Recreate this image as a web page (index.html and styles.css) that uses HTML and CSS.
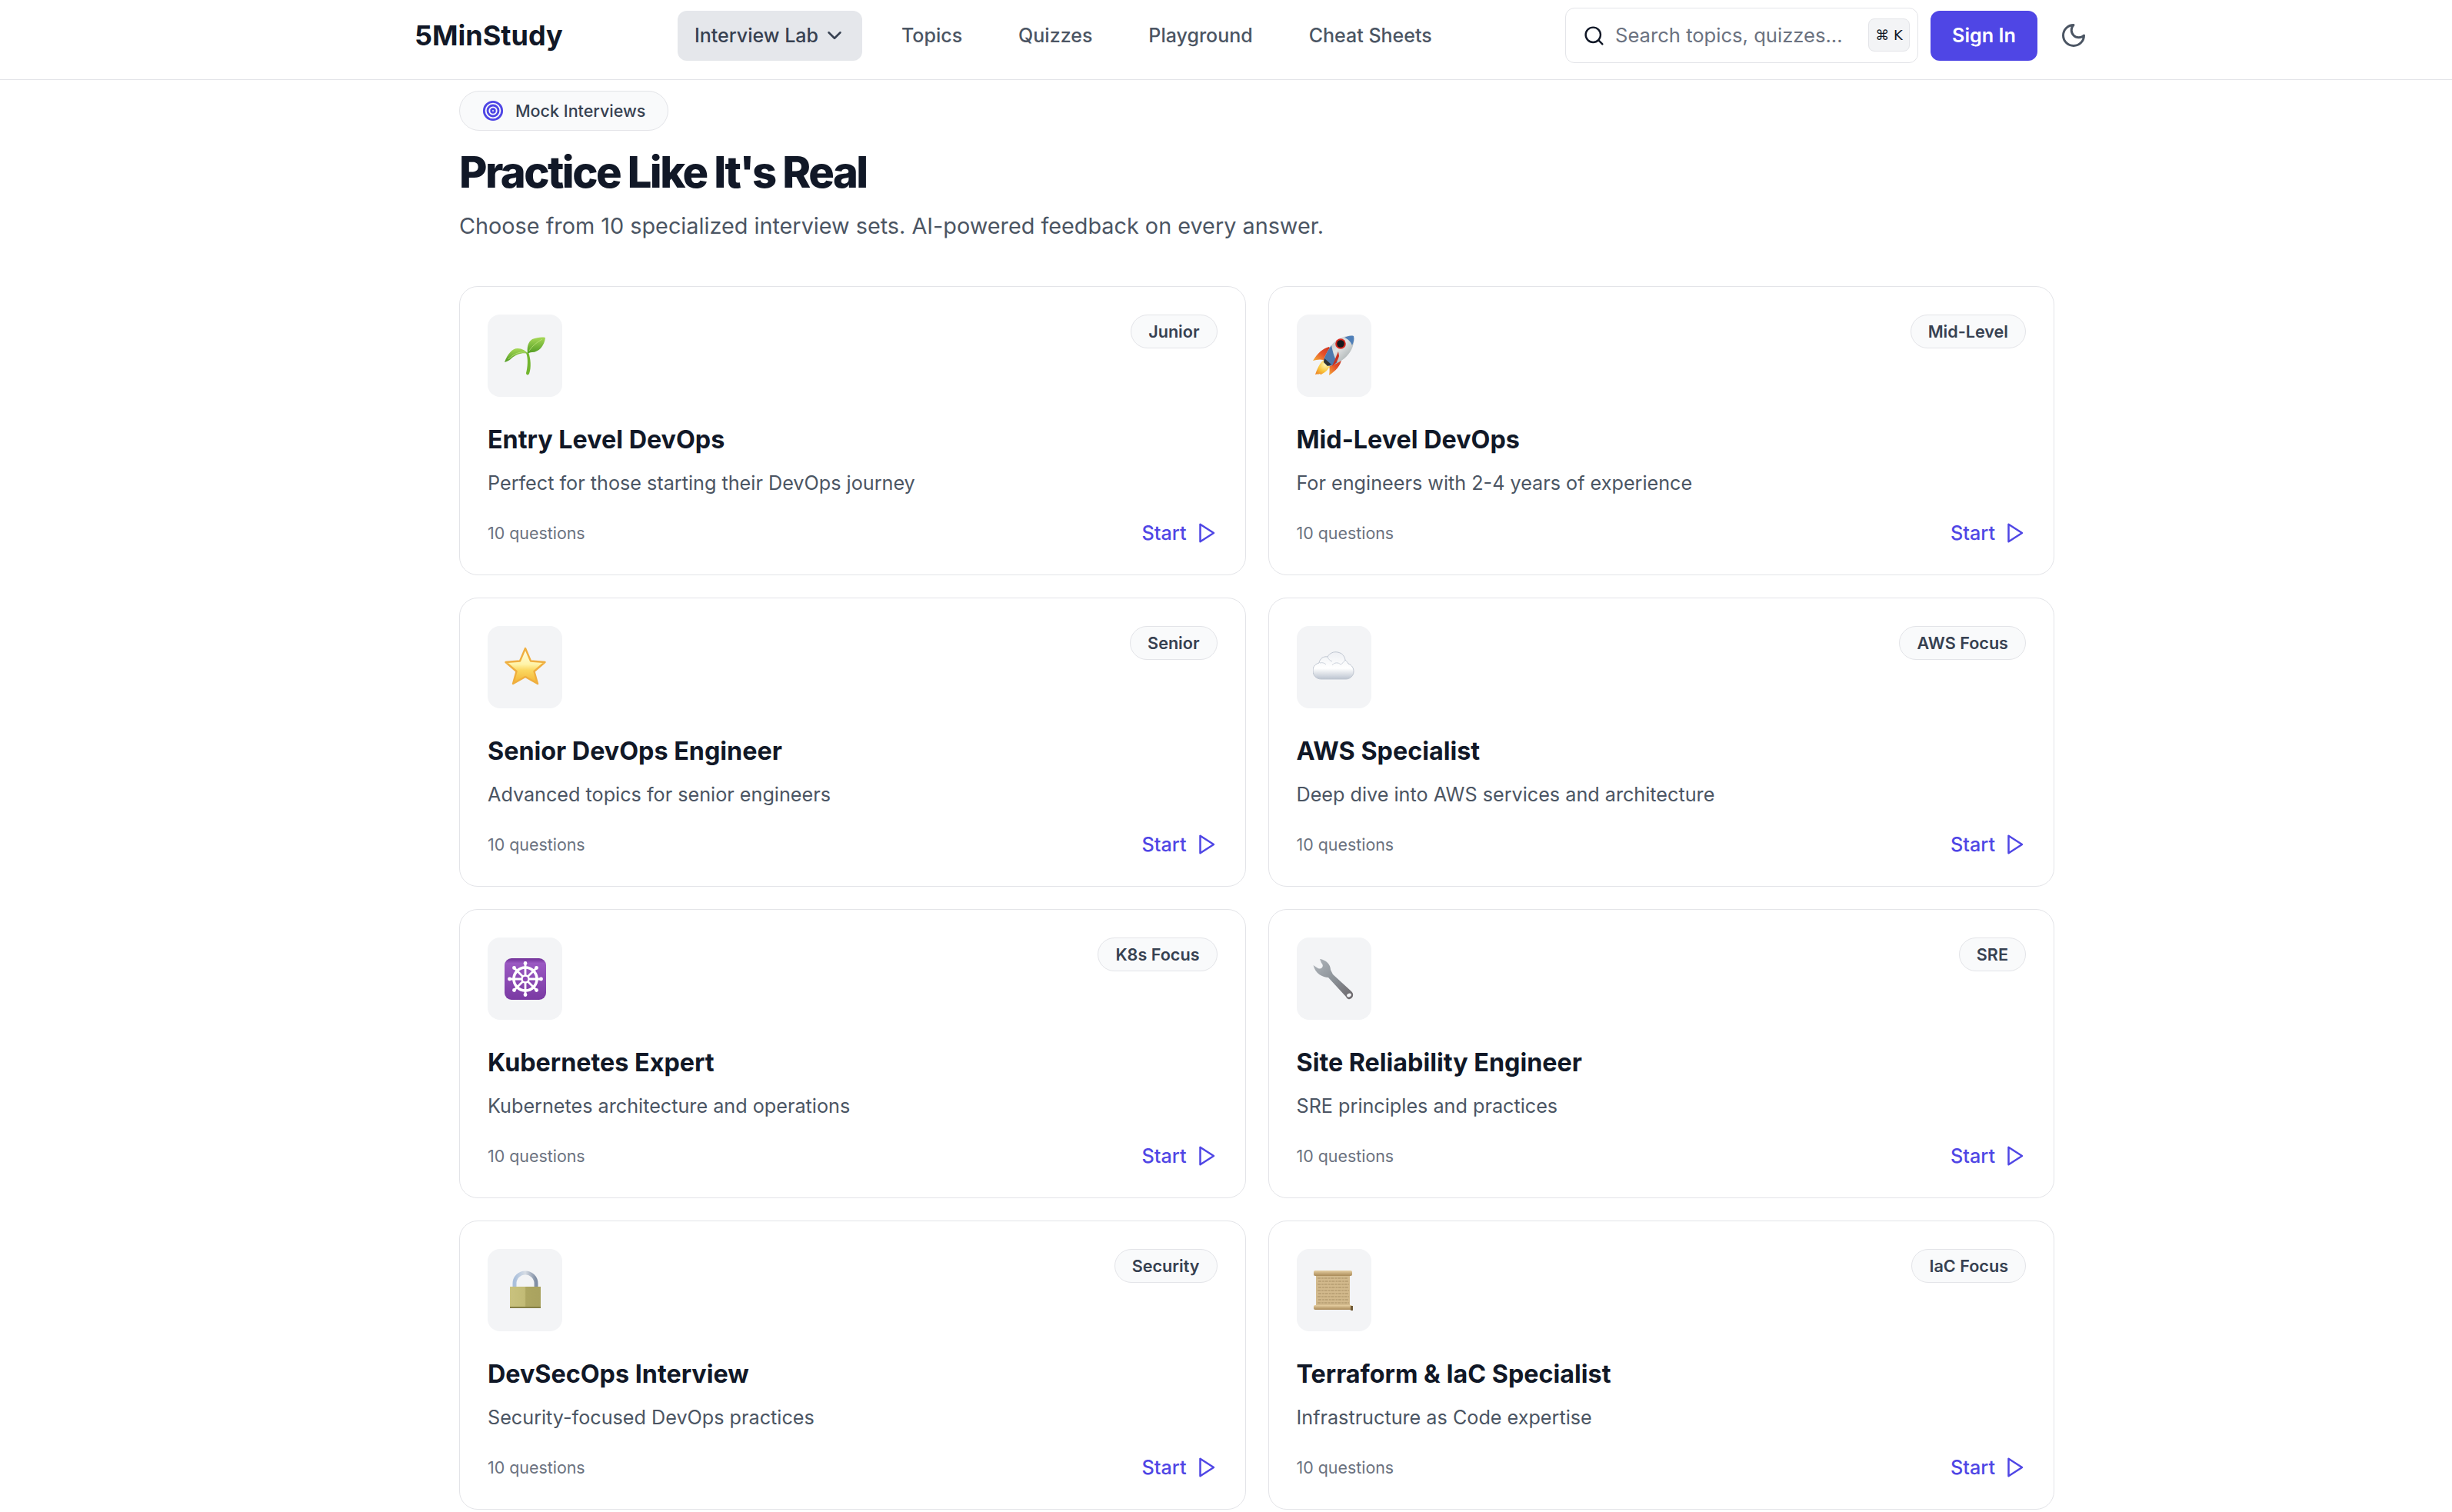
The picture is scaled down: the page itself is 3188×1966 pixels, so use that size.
FILE: index.html
```html
<!DOCTYPE html>
<html lang="en">
<head>
<meta charset="utf-8">
<title>5MinStudy – Mock Interviews</title>
<link rel="stylesheet" href="styles.css">
</head>
<body>
<header class="site-header">
  <a class="logo">5MinStudy</a>
  <nav class="nav">
    <a class="nav-item active">Interview Lab
      <svg class="chev" viewBox="0 0 24 24" fill="none" stroke="currentColor" stroke-width="2" stroke-linecap="round" stroke-linejoin="round"><path d="m6 9 6 6 6-6"/></svg>
    </a>
    <a class="nav-item">Topics</a>
    <a class="nav-item">Quizzes</a>
    <a class="nav-item">Playground</a>
    <a class="nav-item">Cheat Sheets</a>
  </nav>
  <div class="search">
    <svg class="search-icon" viewBox="0 0 24 24" fill="none" stroke="currentColor" stroke-width="2" stroke-linecap="round" stroke-linejoin="round"><circle cx="11" cy="11" r="8"/><path d="m21 21-4.3-4.3"/></svg>
    <span class="search-text">Search topics, quizzes...</span>
    <kbd class="kbd">⌘ K</kbd>
  </div>
  <a class="signin">Sign In</a>
  <a class="theme">
    <svg viewBox="0 0 24 24" fill="none" stroke="currentColor" stroke-width="2" stroke-linecap="round" stroke-linejoin="round"><path d="M12 3a6 6 0 0 0 9 9 9 9 0 1 1-9-9Z"/></svg>
  </a>
</header>

<main class="main">
  <div class="pill">
    <svg class="pill-icon" viewBox="0 0 24 24" fill="none" stroke="currentColor" stroke-width="2.4"><circle cx="12" cy="12" r="10"/><circle cx="12" cy="12" r="6"/><circle cx="12" cy="12" r="2"/></svg>
    Mock Interviews
  </div>
  <h1 class="title">Practice Like It's Real</h1>
  <p class="lead">Choose from 10 specialized interview sets. AI-powered feedback on every answer.</p>

  <section class="grid">

    <article class="card">
      <div class="card-top">
        <div class="tile">
          <svg class="emoji" viewBox="0 0 54 54">
            <defs><linearGradient id="leaf" x1="0" y1="0" x2="0" y2="1"><stop offset="0" stop-color="#a6d856"/><stop offset="1" stop-color="#4f9a22"/></linearGradient></defs>
            <path d="M28 23C31 30 30 42 28 49C28 52 31 52 32 50C35 42 34 30 31 22Z" fill="#72b52e"/>
            <path d="M0 35C4 24 10 17 17 17C23 17 27 20 31 24C23 22 15 25 9 30C6 33 3 34 0 35Z" fill="url(#leaf)"/>
            <path d="M53 3C52 14 44 22 36 22C33 22 31 23 30 24C29 16 30 9 36 5C42 3 48 2 53 3Z" fill="url(#leaf)"/>
            <path d="M32 20C36 14 42 9 49 5M5 31C11 25 18 21 27 22" fill="none" stroke="#c2e583" stroke-width=".7"/>
          </svg>
        </div>
        <span class="tag">Junior</span>
      </div>
      <h2 class="card-title">Entry Level DevOps</h2>
      <p class="card-desc">Perfect for those starting their DevOps journey</p>
      <div class="card-foot">
        <span class="count">10 questions</span>
        <a class="start">Start <svg class="play" viewBox="0 0 24 24" fill="none" stroke="currentColor" stroke-width="2" stroke-linecap="round" stroke-linejoin="round"><path d="M6 3v18l14-9Z"/></svg></a>
      </div>
    </article>

    <article class="card">
      <div class="card-top">
        <div class="tile">
          <svg class="emoji" viewBox="0 0 54 54">
            <defs>
              <linearGradient id="hull" x1="0" y1="0" x2="1" y2="1"><stop offset="0" stop-color="#9a9fa3"/><stop offset=".45" stop-color="#e2e4e4"/><stop offset="1" stop-color="#8a9597"/></linearGradient>
              <linearGradient id="fin" x1="0" y1="1" x2="1" y2="0"><stop offset="0" stop-color="#f6b23a"/><stop offset=".5" stop-color="#e5502a"/><stop offset="1" stop-color="#c9301f"/></linearGradient>
              <radialGradient id="flame" cx=".65" cy=".35" r=".8"><stop offset="0" stop-color="#fff5b8"/><stop offset=".55" stop-color="#f9c63c"/><stop offset="1" stop-color="#ee8a2a"/></radialGradient>
            </defs>
            <path d="M21 15C13 17 6 23 0 33C6 31 12 31 18 33L26 22Z" fill="url(#fin)"/>
            <path d="M37 32C36 39 30 46 21 52C22 46 22 41 20 36L30 28Z" fill="url(#fin)"/>
            <path d="M16 31C10 34 7 40 3 51C6 50 7 51 9 50C10 52 12 50 14 49C19 46 22 41 23 37Z" fill="url(#flame)"/>
            <path d="M53 1C44 -1 31 4 24 13C19 20 15 28 14 33L21 40C27 39 35 35 41 30C51 22 55 9 53 1Z" fill="url(#hull)"/>
            <path d="M53 1C49 0 45 1 41 3C46 5 49 8 51 13C53 9 54 5 53 1Z" fill="#4f7fb8"/>
            <path d="M24 13C19 20 15 28 14 33L21 40C26 39 29 37 32 35C28 30 26 22 24 13Z" fill="#4f79ad"/>
            <path d="M15 30L14 35L19 40L24 38Z" fill="#2d3134"/>
            <path d="M33 21C30 28 27 36 25 40C30 37 32 33 34 27Z" fill="#c9301f"/>
            <circle cx="36" cy="11" r="6.8" fill="#d7281e"/>
            <circle cx="36" cy="11" r="4.8" fill="#16181b"/>
          </svg>
        </div>
        <span class="tag">Mid-Level</span>
      </div>
      <h2 class="card-title">Mid-Level DevOps</h2>
      <p class="card-desc">For engineers with 2-4 years of experience</p>
      <div class="card-foot">
        <span class="count">10 questions</span>
        <a class="start">Start <svg class="play" viewBox="0 0 24 24" fill="none" stroke="currentColor" stroke-width="2" stroke-linecap="round" stroke-linejoin="round"><path d="M6 3v18l14-9Z"/></svg></a>
      </div>
    </article>

    <article class="card">
      <div class="card-top">
        <div class="tile">
          <svg class="emoji" viewBox="0 0 54 54">
            <defs><linearGradient id="star" x1="0" y1="0" x2="0" y2="1"><stop offset="0" stop-color="#fffde8"/><stop offset=".45" stop-color="#fff3a8"/><stop offset=".62" stop-color="#fbd75f"/><stop offset="1" stop-color="#f2b233"/></linearGradient></defs>
            <path d="M27 2L34 18.500L52.500 20L38.500 32L43 48L27 39L11 48L15.500 32L1.500 20L20 18.500Z" fill="url(#star)" stroke="#efae3f" stroke-width="2.400" stroke-linejoin="round"/>
          </svg>
        </div>
        <span class="tag">Senior</span>
      </div>
      <h2 class="card-title">Senior DevOps Engineer</h2>
      <p class="card-desc">Advanced topics for senior engineers</p>
      <div class="card-foot">
        <span class="count">10 questions</span>
        <a class="start">Start <svg class="play" viewBox="0 0 24 24" fill="none" stroke="currentColor" stroke-width="2" stroke-linecap="round" stroke-linejoin="round"><path d="M6 3v18l14-9Z"/></svg></a>
      </div>
    </article>

    <article class="card">
      <div class="card-top">
        <div class="tile">
          <svg class="emoji" viewBox="0 0 54 54">
            <defs><linearGradient id="cloud" x1="0" y1="0" x2="0" y2="1"><stop offset="0" stop-color="#eef0f4"/><stop offset=".6" stop-color="#ffffff"/><stop offset="1" stop-color="#bcc4d0"/></linearGradient></defs>
            <path d="M11 42C4 42 0 37 0 31C0 25 4 22 8 21C9 15 14 12 19 13C22 8 27 6 32 7C38 8 41 12 42 17C44 19 45 20 46 22C51 24 53 28 53 32C53 38 48 42 43 42Z" fill="url(#cloud)" stroke="#bfc6d1" stroke-width="1"/>
            <path d="M9 21C12 20 15 21 17 23M19 13C20 16 22 18 25 19M25 24C28 20 33 20 36 23M42 17C40 20 38 22 36 23" fill="none" stroke="#cdd3dc" stroke-width="1"/>
          </svg>
        </div>
        <span class="tag">AWS Focus</span>
      </div>
      <h2 class="card-title">AWS Specialist</h2>
      <p class="card-desc">Deep dive into AWS services and architecture</p>
      <div class="card-foot">
        <span class="count">10 questions</span>
        <a class="start">Start <svg class="play" viewBox="0 0 24 24" fill="none" stroke="currentColor" stroke-width="2" stroke-linecap="round" stroke-linejoin="round"><path d="M6 3v18l14-9Z"/></svg></a>
      </div>
    </article>

    <article class="card">
      <div class="card-top">
        <div class="tile">
          <svg class="emoji" viewBox="0 0 54 54">
            <defs><linearGradient id="purple" x1="0" y1="0" x2="0" y2="1"><stop offset="0" stop-color="#6f2f96"/><stop offset=".12" stop-color="#9a58c2"/><stop offset="1" stop-color="#7a3aa3"/></linearGradient></defs>
            <rect x="0" y="0" width="54" height="54" rx="9" fill="url(#purple)"/>
            <g stroke="#fff" fill="none">
              <circle cx="27" cy="27" r="15" stroke-width="3.600"/>
              <path d="M27 6V48M6 27H48M12.200 12.200L41.800 41.800M41.800 12.200L12.200 41.800" stroke-width="2.800" stroke-linecap="round"/>
              <circle cx="27" cy="27" r="4.500" fill="#8f4bb6" stroke-width="2.400"/>
            </g>
            <g fill="#fff"><circle cx="27" cy="6.500" r="2.400"/><circle cx="27" cy="47.500" r="2.400"/><circle cx="6.500" cy="27" r="2.400"/><circle cx="47.500" cy="27" r="2.400"/><circle cx="12.500" cy="12.500" r="2.400"/><circle cx="41.500" cy="41.500" r="2.400"/><circle cx="41.500" cy="12.500" r="2.400"/><circle cx="12.500" cy="41.500" r="2.400"/></g>
          </svg>
        </div>
        <span class="tag">K8s Focus</span>
      </div>
      <h2 class="card-title">Kubernetes Expert</h2>
      <p class="card-desc">Kubernetes architecture and operations</p>
      <div class="card-foot">
        <span class="count">10 questions</span>
        <a class="start">Start <svg class="play" viewBox="0 0 24 24" fill="none" stroke="currentColor" stroke-width="2" stroke-linecap="round" stroke-linejoin="round"><path d="M6 3v18l14-9Z"/></svg></a>
      </div>
    </article>

    <article class="card">
      <div class="card-top">
        <div class="tile">
          <svg class="emoji" viewBox="0 0 54 54">
            <defs><linearGradient id="steel" x1="0" y1="0" x2="1" y2="1"><stop offset="0" stop-color="#b0b6bc"/><stop offset=".5" stop-color="#8c9298"/><stop offset="1" stop-color="#6a6569"/></linearGradient></defs>
            <path d="M9 1C17 2 23 8 23 15L26 21L50 43C54 47 52 52 48 53C46 54 44 52 43 50L20 25C13 25 3 20 0.500 9L5 12Q9 15 12 12Q14 9 11 6Z" fill="url(#steel)"/>
            <ellipse cx="47" cy="48" rx="3" ry="2.200" fill="#f3f4f6" transform="rotate(-30 47 48)"/>
          </svg>
        </div>
        <span class="tag">SRE</span>
      </div>
      <h2 class="card-title">Site Reliability Engineer</h2>
      <p class="card-desc">SRE principles and practices</p>
      <div class="card-foot">
        <span class="count">10 questions</span>
        <a class="start">Start <svg class="play" viewBox="0 0 24 24" fill="none" stroke="currentColor" stroke-width="2" stroke-linecap="round" stroke-linejoin="round"><path d="M6 3v18l14-9Z"/></svg></a>
      </div>
    </article>

    <article class="card">
      <div class="card-top">
        <div class="tile">
          <svg class="emoji" viewBox="0 0 54 54">
            <defs>
              <linearGradient id="brass" x1="0" y1="0" x2="1" y2="0"><stop offset="0" stop-color="#c9c27e"/><stop offset=".48" stop-color="#c2bb76"/><stop offset=".52" stop-color="#ada661"/><stop offset="1" stop-color="#a9a25f"/></linearGradient>
              <linearGradient id="shackle" x1="0" y1="0" x2="1" y2="0"><stop offset="0" stop-color="#a9bfdc"/><stop offset=".5" stop-color="#d7dde5"/><stop offset="1" stop-color="#7f8da3"/></linearGradient>
            </defs>
            <path d="M13 24V18A14 14 0 0 1 41 18V24" fill="none" stroke="url(#shackle)" stroke-width="5"/>
            <rect x="7" y="22" width="40" height="28" fill="url(#brass)"/>
            <rect x="7" y="48" width="40" height="2" fill="#857f45"/>
          </svg>
        </div>
        <span class="tag">Security</span>
      </div>
      <h2 class="card-title">DevSecOps Interview</h2>
      <p class="card-desc">Security-focused DevOps practices</p>
      <div class="card-foot">
        <span class="count">10 questions</span>
        <a class="start">Start <svg class="play" viewBox="0 0 24 24" fill="none" stroke="currentColor" stroke-width="2" stroke-linecap="round" stroke-linejoin="round"><path d="M6 3v18l14-9Z"/></svg></a>
      </div>
    </article>

    <article class="card">
      <div class="card-top">
        <div class="tile">
          <svg class="emoji" viewBox="0 0 54 54">
            <defs><linearGradient id="roll" x1="0" y1="0" x2="0" y2="1"><stop offset="0" stop-color="#e6cfa2"/><stop offset="1" stop-color="#a98a58"/></linearGradient></defs>
            <rect x="4" y="4" width="44" height="46" fill="#d2b98c"/>
            <path d="M6 11H46M7 15H46M6 19H47M7 23H46M6 27H47M7 31H46M6 35H47M7 39H46M6 43H47" stroke="#a58d63" stroke-width="1" stroke-dasharray="4 1.200 2.500 1"/>
            <rect x="1" y="1" width="50" height="7" rx="2" fill="url(#roll)"/>
            <rect x="1" y="46" width="50" height="6" rx="2" fill="url(#roll)"/>
            <rect x="49" y="47" width="3" height="6" fill="#6f5a38"/>
          </svg>
        </div>
        <span class="tag">IaC Focus</span>
      </div>
      <h2 class="card-title">Terraform &amp; IaC Specialist</h2>
      <p class="card-desc">Infrastructure as Code expertise</p>
      <div class="card-foot">
        <span class="count">10 questions</span>
        <a class="start">Start <svg class="play" viewBox="0 0 24 24" fill="none" stroke="currentColor" stroke-width="2" stroke-linecap="round" stroke-linejoin="round"><path d="M6 3v18l14-9Z"/></svg></a>
      </div>
    </article>

  </section>
</main>
</body>
</html>
```

FILE: styles.css
```css
* { box-sizing: border-box; }

html, body {
  margin: 0;
  padding: 0;
  background: #fff;
  font-family: Inter, "Noto Sans", sans-serif;
  color: #111827;
}

.site-header {
  display: flex;
  align-items: center;
  height: 104px;
  padding: 0 476px 11px 539px;
  border-bottom: 1px solid #e3e4e8;
}

.logo {
  width: 342px;
  font-size: 36px;
  font-weight: 700;
  letter-spacing: 0;
  color: #111827;
}

.nav {
  display: flex;
  align-items: center;
  gap: 29px;
}

.nav-item {
  display: flex;
  align-items: center;
  gap: 6px;
  height: 65px;
  padding: 0 22px;
  border-radius: 12px;
  font-size: 25px;
  font-weight: 500;
  color: #4b5563;
}

.nav-item.active {
  padding-right: 21px;
  background: #e5e7eb;
  color: #374151;
}

.chev { width: 30px; height: 30px; }

.search {
  display: flex;
  align-items: center;
  width: 459px;
  height: 72px;
  margin-left: auto;
  padding: 0 10px 0 22px;
  border: 1px solid #e3e4e8;
  border-radius: 12px;
}

.search-icon { width: 29px; height: 29px; flex: none; color: #111827; }

.search-text {
  flex: 1;
  margin: -2px 0 0 13px;
  font-size: 25.600px;
  color: #6b7280;
}

.kbd {
  display: flex;
  align-items: center;
  justify-content: center;
  width: 54px;
  height: 43px;
  margin-top: -1px;
  border: 1px solid #e3e4e8;
  border-radius: 8px;
  background: #f3f4f6;
  font-family: "DejaVu Sans", sans-serif;
  font-size: 18px;
  font-weight: 500;
  color: #111827;
}

.signin {
  display: flex;
  align-items: center;
  justify-content: center;
  width: 139px;
  height: 65px;
  margin-left: 16px;
  border-radius: 12px;
  background: #4f46e5;
  color: #fff;
  font-size: 25.200px;
  font-weight: 600;
}

.theme {
  display: flex;
  width: 32px;
  height: 32px;
  margin-left: 31px;
  color: #4b5563;
}
.theme svg { width: 36px; height: 36px; margin: -2px; flex: none; }

.main {
  width: 2671px;
  padding: 14px 0 0 597px;
}

.pill {
  display: inline-flex;
  align-items: center;
  gap: 15px;
  height: 52px;
  padding: 0 29px;
  border: 1px solid #e3e4e8;
  border-radius: 26px;
  background: #f9fafb;
  font-size: 21.500px;
  font-weight: 500;
  color: #374151;
}
.pill-icon { width: 28px; height: 28px; color: #4f46e5; }

.title {
  margin: 18px 0 0;
  font-size: 56px;
  line-height: 72px;
  font-weight: 800;
  letter-spacing: -2.550px;
  color: #111827;
}

.lead {
  margin: 14px 0 0;
  font-size: 28.800px;
  line-height: 39px;
  color: #4b5563;
}

.grid {
  display: grid;
  grid-template-columns: 1fr 1fr;
  gap: 29px;
  margin-top: 59px;
}

.card {
  height: 376px;
  padding: 36px;
  border: 1px solid #e3e4e8;
  border-radius: 24px;
  background: #fff;
}

.card-top {
  display: flex;
  align-items: flex-start;
  justify-content: space-between;
}

.tile {
  display: flex;
  align-items: center;
  justify-content: center;
  width: 97px;
  height: 107px;
  border-radius: 16px;
  background: #f3f4f6;
}

.emoji { width: 54px; height: 54px; display: block; }

.tag {
  display: flex;
  align-items: center;
  height: 44px;
  padding: 0 22px;
  border: 1px solid #e3e4e8;
  border-radius: 22px;
  background: #f9fafb;
  font-size: 21.600px;
  font-weight: 600;
  color: #374151;
}

.card-title {
  margin: 33px 0 0;
  font-size: 32.300px;
  line-height: 45px;
  font-weight: 700;
  color: #111827;
}

.card-desc {
  margin: 16px 0 0;
  font-size: 25.200px;
  line-height: 36px;
  color: #4b5563;
}

.card-foot {
  display: flex;
  align-items: center;
  justify-content: space-between;
  height: 36px;
  margin-top: 29px;
}

.count { font-size: 21.400px; color: #6b7280; }

.start {
  display: flex;
  align-items: center;
  gap: 10px;
  font-size: 25.200px;
  font-weight: 500;
  color: #4f46e5;
}
.play { width: 30px; height: 30px; }
```
